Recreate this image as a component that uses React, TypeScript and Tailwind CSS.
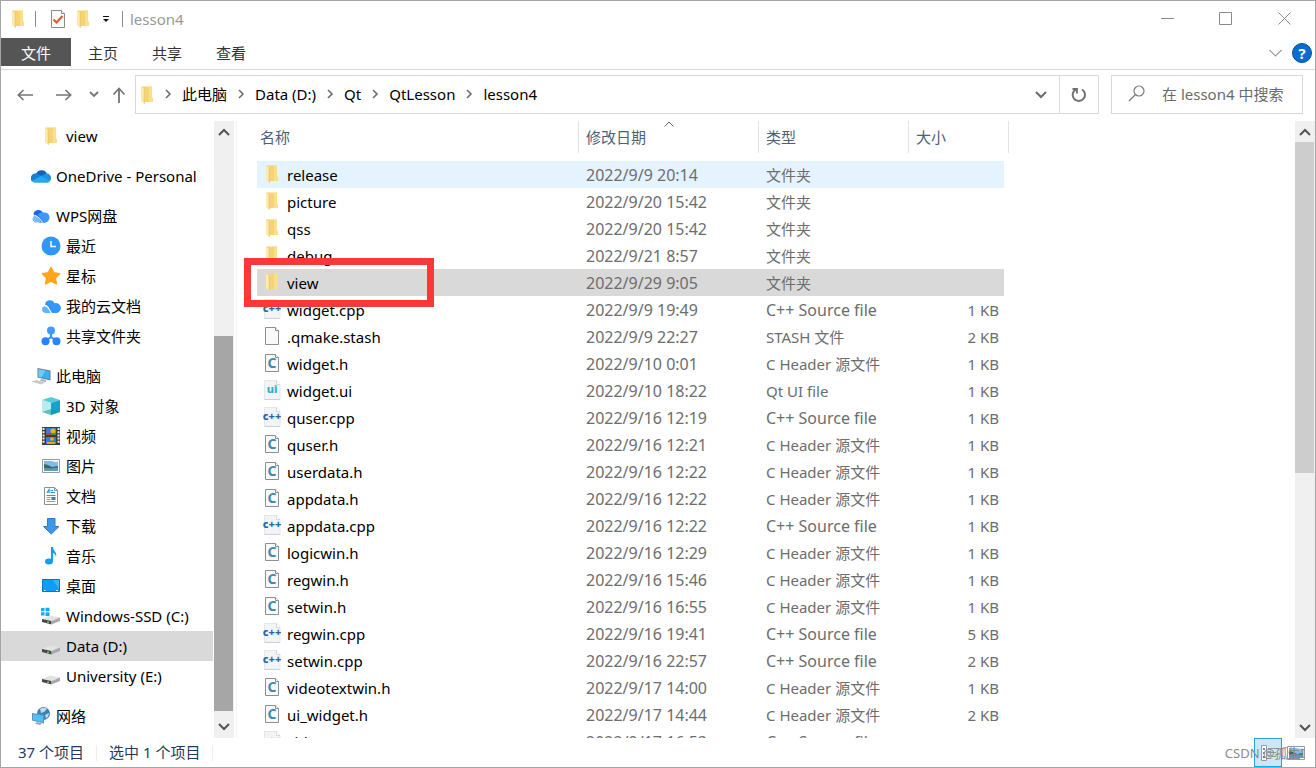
import React from "react";
import clsx from "clsx";

type IconProps = { className?: string };

/* ---------- icons ---------- */

function FolderIcon({ className }: IconProps) {
  return (
    <svg className={clsx("shrink-0", className)} width="14" height="18" viewBox="0 0 14 18">
      <path d="M1 .5h11v11l1 .6V16H3z" fill="#f6d373" />
      <path d="M9 .5h3v11l1 .6V16H9z" fill="#fae08c" />
      <path d="M1 .5l3.600 2.500V18L1 15.600z" fill="#fdeab0" />
      <path d="M4.600 3V18l-.8-.6V2.500z" fill="#e7bd55" />
    </svg>
  );
}

function ChevronRight() {
  return (
    <svg width="8" height="10" viewBox="0 0 8 10" fill="none" stroke="#6d6d6d" strokeWidth="1.6">
      <path d="M2 1l4 4-4 4" />
    </svg>
  );
}

function ChevronDown({ className }: IconProps) {
  return (
    <svg className={className} width="12" height="8" viewBox="0 0 12 8" fill="none" stroke="currentColor" strokeWidth="2">
      <path d="M1 1l5 5 5-5" />
    </svg>
  );
}

function ChevronUp({ className }: IconProps) {
  return (
    <svg className={className} width="12" height="8" viewBox="0 0 12 8" fill="none" stroke="currentColor" strokeWidth="2">
      <path d="M1 7l5-5 5 5" />
    </svg>
  );
}

function PropertiesIcon() {
  return (
    <svg width="16" height="20" viewBox="0 0 16 20">
      <path d="M1.500 1.500h10l3 3v14h-13z" fill="#fafafa" stroke="#8b8b8b" />
      <path d="M11.500 1.500v3h3" fill="#fff" stroke="#8b8b8b" />
      <path d="M3.500 10.500l3 3L12.500 7" fill="none" stroke="#f0561d" strokeWidth="2" />
    </svg>
  );
}

function OneDriveIcon() {
  return (
    <svg width="20" height="14" viewBox="0 0 20 14">
      <path d="M5 5a6 6 0 0 1 11-.5L10 9z" fill="#0f62b5" />
      <path d="M5 4.200A5 5 0 0 0 1 12.500l11-5z" fill="#1480d8" />
      <path d="M15 4.300a4.600 4.600 0 0 1 3.500 8L9 7.500z" fill="#1a92e6" />
      <path d="M1 12l9-5 9 5a3 3 0 0 1-2.500 1.800H4A4 4 0 0 1 1 12z" fill="#28a8ea" />
    </svg>
  );
}

function WpsCloudIcon() {
  return (
    <svg width="20" height="14" viewBox="0 0 20 14">
      <path d="M2.500 5a4.800 4.800 0 0 1 9.300-.8A4.800 4.800 0 0 1 14 13.500H8z" fill="#1769ee" />
      <path d="M7 6a5 5 0 0 1 6-2.500 5 5 0 0 1 1 10h-3z" fill="#3f96fb" />
      <path d="M4 6.500a3.700 3.700 0 0 0 0 7h6C8.500 11 7.500 7 4 6.500z" fill="#7dbdfd" />
      <path d="M3.500 6.300C8 7 9 11 11.500 13.500" fill="none" stroke="#fff" />
    </svg>
  );
}

function CloudDocIcon() {
  return (
    <svg width="20" height="15" viewBox="0 0 20 15">
      <path d="M4 5.500a5 5 0 0 1 9.500-1.300A5 5 0 1 1 14.500 14H11C9 11 8 7 4 5.500z" fill="#3296fa" />
      <path d="M3 7.200a3.600 3.600 0 0 0 1 6.800h5.500C8.500 11 6.500 7.500 3 7.200z" fill="#63b4fc" />
    </svg>
  );
}

function ClockIcon() {
  return (
    <svg width="20" height="20" viewBox="0 0 20 20">
      <circle cx="10" cy="10" r="9.500" fill="#2f96fb" />
      <path d="M10 5v5.500h5" fill="none" stroke="#fff" strokeWidth="1.500" />
    </svg>
  );
}

function StarIcon() {
  return (
    <svg width="20" height="20" viewBox="0 0 20 20">
      <path
        d="M10 1.500l2.600 5.300 5.900.9-4.200 4.200 1 5.900-5.300-2.700-5.300 2.700 1-5.900L1.500 7.700l5.900-.9z"
        fill="#fca71c"
        stroke="#fca71c"
        strokeWidth="1.600"
        strokeLinejoin="round"
      />
    </svg>
  );
}

function ShareIcon() {
  return (
    <svg width="20" height="20" viewBox="0 0 20 20">
      <path d="M10 5v6L4.500 15M10 11l5.500 4" stroke="#2f8ffb" strokeWidth="2" fill="none" />
      <circle cx="10" cy="4.500" r="4" fill="#3f9cfc" />
      <circle cx="4.500" cy="15.200" r="4" fill="#2287fb" />
      <circle cx="15.500" cy="15.200" r="4" fill="#2287fb" />
    </svg>
  );
}

function ComputerIcon() {
  return (
    <svg width="20" height="18" viewBox="0 0 20 18">
      <path d="M6.500 1l13 2.500v10l-13-3z" fill="#6d7c88" />
      <path d="M7.500 2.200l11 2.200v7.800l-11-2.400z" fill="#36b0ee" />
      <path d="M7.500 2.200l7 1.400-4 6.800-3-.6z" fill="#6ccbf7" />
      <path d="M10 12l5 1v2l-6-1z" fill="#aab2b8" />
      <path d="M.5 14.500l5-1.500 8.500 2.500-4 2z" fill="#c5cacf" />
    </svg>
  );
}

function CubeIcon() {
  return (
    <svg width="20" height="20" viewBox="0 0 20 20">
      <path d="M1 4l9-3 9 3-9 3z" fill="#57cbd8" />
      <path d="M1 4l9 3v12l-9-3z" fill="#b9ecef" />
      <path d="M10 7l9-3v12l-9 3z" fill="#16a3cb" />
      <path d="M10 13l9 3-9 3-9-3z" fill="#1795a8" opacity=".55" />
    </svg>
  );
}

function VideoIcon() {
  return (
    <svg width="20" height="20" viewBox="0 0 20 20">
      <path d="M1 1h18v18H1z" fill="#3b3b3b" />
      <path d="M5 2h10v7H5zM5 11h10v7H5z" fill="#3a7bd9" />
      <path d="M2.500 2v16M17.500 2v16" stroke="#eee" strokeWidth="2" strokeDasharray="2 1.200" />
      <circle cx="12" cy="5" r="2.500" fill="#e8b41e" />
      <path d="M5 7h5v2H5z" fill="#c44131" />
      <path d="M10 7h5v2h-5z" fill="#3c9a3c" />
      <circle cx="11" cy="13" r="1.800" fill="#e8b41e" />
      <path d="M6 16h8v2H6z" fill="#e2a82a" />
    </svg>
  );
}

function PictureIcon() {
  return (
    <svg width="20" height="16" viewBox="0 0 20 16">
      <path d="M1.500 1.500h17v13h-17z" fill="#fff" stroke="#9a9a9a" />
      <path d="M3 3h14v6H3z" fill="#7fb9f0" />
      <path d="M3 6l4 1 4 2 6-1v5H3z" fill="#3c6a5b" />
      <path d="M3 10l6 .5 8-1V13H3z" fill="#5d9cbb" />
      <path d="M10 3l5 1.500 2-.5V3z" fill="#fff" opacity=".7" />
    </svg>
  );
}

function DocumentIcon() {
  return (
    <svg width="16" height="20" viewBox="0 0 16 20">
      <path d="M1.500 1.500h10l3 3v14h-13z" fill="#fff" stroke="#8f8f8f" />
      <path d="M11.500 1.500v3h3" fill="none" stroke="#8f8f8f" />
      <path d="M4 7l2-3.500V7M7.500 4.500H10M7.500 6.500H12" stroke="#1e9be8" strokeWidth="1.200" fill="none" />
      <path d="M3.500 9.500h9" stroke="#1e9be8" />
      <path d="M3.500 11.500h4M3.500 13.500h4M3.500 15.500h9" stroke="#9a9a9a" />
      <path d="M8.500 11h4v3h-4z" fill="#2c84c4" />
    </svg>
  );
}

function DownloadIcon() {
  return (
    <svg width="20" height="18" viewBox="0 0 20 18">
      <path d="M6.500 1.500h7.500v8h4L10.300 17 2.500 9.500h4z" fill="#3d97e6" stroke="#2a7cc7" />
    </svg>
  );
}

function MusicIcon() {
  return (
    <svg width="14" height="18" viewBox="0 0 14 18">
      <ellipse cx="5" cy="14.500" rx="4" ry="3" fill="#119df5" />
      <path d="M7 0h2c0 4 4.500 5 3 10-.5-3-2-3.500-3-4v9H7z" fill="#119df5" />
    </svg>
  );
}

function DesktopIcon() {
  return (
    <svg width="20" height="14" viewBox="0 0 20 14">
      <path d="M1.500.5h17v12h-17z" fill="#0d9cf7" stroke="#0675ba" />
      <path d="M12 1h6v9z" fill="#39b4fc" />
      <path d="M3 11.500h1.500M15 11.500h2" stroke="#fff" />
    </svg>
  );
}

function DriveIcon({ windows }: { windows?: boolean }) {
  return (
    <svg width="20" height="18" viewBox="0 0 20 18">
      {windows && (
        <path d="M0 1h3.500v3.300H0zM4.500.7h4v3.600h-4zM0 5.300h3.500v3.300H0zM4.500 5.300h4v3.600h-4z" fill="#11aef0" />
      )}
      <path d="M1 12l8-3.500 10 2-8.500 3.500z" fill="#e3e3e3" />
      <path d="M1 12l9.500 2v3.500L1 15z" fill="#474747" />
      <path d="M10.500 14l8.500-3.500V14l-8.500 3.500z" fill="#a9a9a9" />
      <path d="M6 14.500h2v1.500H6z" fill="#4de04d" />
    </svg>
  );
}

function NetworkIcon() {
  return (
    <svg width="20" height="20" viewBox="0 0 20 20">
      <circle cx="12.500" cy="7.500" r="6.500" fill="#3f7fae" />
      <path d="M9 3c2-2 6-1.500 7 0l-3 3-3 1zM14 9l4-2c0 3-2 5-3 5.500z" fill="#b9dcee" />
      <path d="M1 7l12 1.800v8.700L1 14.500z" fill="#5b95bd" />
      <path d="M2 8.200l10 1.500v6.500l-10-2.400z" fill="#4fc0f8" />
      <path d="M6 16l5 1.500-2 1.500-5-1.200z" fill="#9aa7af" />
    </svg>
  );
}

function FileIcon({ kind }: { kind: string }) {
  if (kind === "folder") return <FolderIcon />;
  if (kind === "cpp" || kind === "ui") {
    return (
      <svg className="shrink-0" width="18" height="20" viewBox="0 0 18 20">
        <path d="M1.500.5h12l3.500 4v15H1.500z" fill="#f3f4f7" stroke="#e6e6e9" />
        <path d="M13.500.5v4H17" fill="#fff" stroke="#d6d6d9" />
        <path d="M1.500 19.500H17" stroke="#cfcfd1" />
        <text
          x="9"
          y="13"
          textAnchor="middle"
          fontFamily="Noto Sans, sans-serif"
          fontWeight="800"
          fontSize="11"
          fill={kind === "cpp" ? "#2764a8" : "#2fb0c4"}
        >
          {kind === "cpp" ? "c++" : "ui"}
        </text>
      </svg>
    );
  }
  return (
    <svg className="shrink-0" width="16" height="20" viewBox="0 0 16 20">
      <path d="M1.500 1.500h10l3 3v14h-13z" fill="#f8fafa" stroke="#8e8e8e" />
      <path d="M11.500 1.500v3h3" fill="#fff" stroke="#8e8e8e" />
      {kind === "h" && (
        <text x="8" y="15" textAnchor="middle" fontFamily="Noto Sans, sans-serif" fontWeight="700" fontSize="14" fill="#4688a5">
          C
        </text>
      )}
    </svg>
  );
}

/* ---------- data ---------- */

const crumbs = ["此电脑", "Data (D:)", "Qt", "QtLesson", "lesson4"];

const navGroups = [
  [{ label: "view", icon: <FolderIcon />, child: true }],
  [{ label: "OneDrive - Personal", icon: <OneDriveIcon /> }],
  [
    { label: "WPS网盘", icon: <WpsCloudIcon /> },
    { label: "最近", icon: <ClockIcon />, child: true },
    { label: "星标", icon: <StarIcon />, child: true },
    { label: "我的云文档", icon: <CloudDocIcon />, child: true },
    { label: "共享文件夹", icon: <ShareIcon />, child: true },
  ],
  [
    { label: "此电脑", icon: <ComputerIcon /> },
    { label: "3D 对象", icon: <CubeIcon />, child: true },
    { label: "视频", icon: <VideoIcon />, child: true },
    { label: "图片", icon: <PictureIcon />, child: true },
    { label: "文档", icon: <DocumentIcon />, child: true },
    { label: "下载", icon: <DownloadIcon />, child: true },
    { label: "音乐", icon: <MusicIcon />, child: true },
    { label: "桌面", icon: <DesktopIcon />, child: true },
    { label: "Windows-SSD (C:)", icon: <DriveIcon windows />, child: true },
    { label: "Data (D:)", icon: <DriveIcon />, child: true, active: true },
    { label: "University (E:)", icon: <DriveIcon />, child: true },
  ],
  [{ label: "网络", icon: <NetworkIcon /> }],
] as { label: string; icon: React.ReactNode; child?: boolean; active?: boolean }[][];

const typeNames: Record<string, string> = {
  folder: "文件夹",
  cpp: "C++ Source file",
  h: "C Header 源文件",
  ui: "Qt UI file",
  stash: "STASH 文件",
};

const files = [
  { name: "release", date: "2022/9/9 20:14", kind: "folder", size: "" },
  { name: "picture", date: "2022/9/20 15:42", kind: "folder", size: "" },
  { name: "qss", date: "2022/9/20 15:42", kind: "folder", size: "" },
  { name: "debug", date: "2022/9/21 8:57", kind: "folder", size: "" },
  { name: "view", date: "2022/9/29 9:05", kind: "folder", size: "" },
  { name: "widget.cpp", date: "2022/9/9 19:49", kind: "cpp", size: "1 KB" },
  { name: ".qmake.stash", date: "2022/9/9 22:27", kind: "stash", size: "2 KB" },
  { name: "widget.h", date: "2022/9/10 0:01", kind: "h", size: "1 KB" },
  { name: "widget.ui", date: "2022/9/10 18:22", kind: "ui", size: "1 KB" },
  { name: "quser.cpp", date: "2022/9/16 12:19", kind: "cpp", size: "1 KB" },
  { name: "quser.h", date: "2022/9/16 12:21", kind: "h", size: "1 KB" },
  { name: "userdata.h", date: "2022/9/16 12:22", kind: "h", size: "1 KB" },
  { name: "appdata.h", date: "2022/9/16 12:22", kind: "h", size: "1 KB" },
  { name: "appdata.cpp", date: "2022/9/16 12:22", kind: "cpp", size: "1 KB" },
  { name: "logicwin.h", date: "2022/9/16 12:29", kind: "h", size: "1 KB" },
  { name: "regwin.h", date: "2022/9/16 15:46", kind: "h", size: "1 KB" },
  { name: "setwin.h", date: "2022/9/16 16:55", kind: "h", size: "1 KB" },
  { name: "regwin.cpp", date: "2022/9/16 19:41", kind: "cpp", size: "5 KB" },
  { name: "setwin.cpp", date: "2022/9/16 22:57", kind: "cpp", size: "2 KB" },
  { name: "videotextwin.h", date: "2022/9/17 14:00", kind: "h", size: "1 KB" },
  { name: "ui_widget.h", date: "2022/9/17 14:44", kind: "h", size: "2 KB" },
  { name: "videonow.cpp", date: "2022/9/17 16:53", kind: "cpp", size: "1 KB" },
];

/* ---------- layout ---------- */

function TitleBar() {
  return (
    <header className="flex h-[37px] shrink-0 items-center pb-0.5 pl-2.5">
      <FolderIcon />
      <span className="ml-2.5 h-4 w-px bg-[#8a8a8a]" />
      <button className="ml-3.5" aria-label="属性">
        <PropertiesIcon />
      </button>
      <button className="ml-2.5" aria-label="新建文件夹">
        <FolderIcon />
      </button>
      <button className="ml-3" aria-label="自定义快速访问工具栏">
        <svg width="8" height="8" viewBox="0 0 8 8">
          <path d="M1 1.500h6" stroke="#111" />
          <path d="M1 4h6L4 7z" fill="#111" />
        </svg>
      </button>
      <span className="ml-3 h-4 w-px bg-[#8a8a8a]" />
      <h1 className="ml-[7px] flex-1 text-[#999999]">lesson4</h1>
      <div className="flex pr-px text-[#8a8a8a]">
        <button className="flex w-[58px] justify-center" aria-label="最小化">
          <svg width="13" height="13" viewBox="0 0 13 13" stroke="currentColor">
            <path d="M0 6.500h13" />
          </svg>
        </button>
        <button className="flex w-[58px] justify-center" aria-label="最大化">
          <svg width="13" height="13" viewBox="0 0 13 13" stroke="currentColor" fill="none">
            <path d="M.5.5h12v12H.5z" />
          </svg>
        </button>
        <button className="flex w-[60px] justify-center" aria-label="关闭">
          <svg width="13" height="13" viewBox="0 0 13 13" stroke="currentColor">
            <path d="M.5.5l12 12M12.500.5l-12 12" />
          </svg>
        </button>
      </div>
    </header>
  );
}

function Ribbon() {
  return (
    <nav className="flex h-8 shrink-0 items-start border-b border-[#dadada] text-[#333333]">
      <button className="h-7 w-[70px] bg-[#555555] pt-0.5 text-white">文件</button>
      <button className="h-7 w-16 pt-0.5">主页</button>
      <button className="h-7 w-16 pt-0.5">共享</button>
      <button className="h-7 w-16 pt-0.5">查看</button>
      <div className="ml-auto flex h-[30px] items-center gap-2.5 pr-[3px]">
        <button aria-label="展开功能区" className="text-[#9a9a9a]">
          <svg width="13" height="8" viewBox="0 0 13 8" fill="none" stroke="currentColor" strokeWidth="1.200">
            <path d="M.5 1l6 6 6-6" />
          </svg>
        </button>
        <button className="flex size-5 items-center justify-center rounded-full border border-[#0a4f96] bg-[#0a6cd0] font-bold text-white" aria-label="帮助">
          ?
        </button>
      </div>
    </nav>
  );
}

function AddressBar() {
  return (
    <div className="flex h-[51px] shrink-0 items-start pt-[5px] pr-3 pl-4">
      <div className="flex h-[39px] w-[118px] shrink-0 items-center text-[#757575]">
        <button aria-label="后退">
          <svg width="17" height="12" viewBox="0 0 17 12" fill="none" stroke="currentColor" strokeWidth="1.600">
            <path d="M16 6H1M6.500 1L1.300 6l5.200 5" />
          </svg>
        </button>
        <button className="ml-[22px]" aria-label="前进">
          <svg width="17" height="12" viewBox="0 0 17 12" fill="none" stroke="currentColor" strokeWidth="1.600">
            <path d="M0 6h15M9.500 1l5.200 5-5.200 5" />
          </svg>
        </button>
        <button className="ml-4" aria-label="最近浏览的位置">
          <svg width="10" height="7" viewBox="0 0 10 7" fill="none" stroke="currentColor" strokeWidth="1.800">
            <path d="M1 1l4 4 4-4" />
          </svg>
        </button>
        <button className="ml-[13px]" aria-label="上移">
          <svg width="14" height="16" viewBox="0 0 14 16" fill="none" stroke="currentColor" strokeWidth="1.800">
            <path d="M7 16V2M1.500 7.500L7 1.500l5.500 6" />
          </svg>
        </button>
      </div>
      <div className="flex h-[39px] flex-1 items-center border border-[#d9d9d9] pl-1">
        <FolderIcon />
        <ol className="flex flex-1 items-center pb-0.5">
          {crumbs.map((crumb) => (
            <li key={crumb} className="flex items-center">
              <span className="flex w-7 justify-center">
                <ChevronRight />
              </span>
              <a href="#">{crumb}</a>
            </li>
          ))}
        </ol>
        <button className="flex h-full w-9 items-center justify-center text-[#6b6b6b]" aria-label="历史记录">
          <ChevronDown />
        </button>
        <button className="flex h-full w-[39px] items-center justify-center border-l border-[#d9d9d9]" aria-label="刷新">
          <svg width="16" height="16" viewBox="0 0 16 16" fill="none" stroke="#707070" strokeWidth="2">
            <path d="M11 2.500a6.200 6.200 0 1 1-6-.2" />
            <path d="M1.500 2h4.500v4.500" strokeWidth="1.800" />
          </svg>
        </button>
      </div>
      <label className="ml-3 flex h-[39px] w-48 shrink-0 items-center border border-[#d9d9d9] pb-0.5 pl-4">
        <svg className="shrink-0" width="18" height="17" viewBox="0 0 18 17" fill="none" stroke="#7a7a7a" strokeWidth="1.200">
          <circle cx="11" cy="6" r="5" />
          <path d="M7.500 9.500L1 16" />
        </svg>
        <input
          type="text"
          aria-label="搜索"
          placeholder="在 lesson4 中搜索"
          className="ml-4 w-full min-w-0 outline-none placeholder:text-[#6b6b6b]"
        />
      </label>
    </div>
  );
}

function Sidebar() {
  return (
    <aside className="flex w-[236px] shrink-0 border-r border-[#f3f3f3]">
      <nav className="flex w-[212px] shrink-0 flex-col gap-2.5 overflow-hidden">
        {navGroups.map((group, i) => (
          <ul key={i}>
            {group.map((item) => (
              <li key={item.label}>
                <a
                  href="#"
                  className={clsx(
                    "flex h-[30px] items-center gap-1 whitespace-nowrap",
                    item.child ? "pl-10" : "pl-[30px]",
                    item.active && "bg-[#d9d9d9]",
                  )}
                >
                  <span className="flex w-5 shrink-0 justify-center">{item.icon}</span>
                  <span className="pl-px">{item.label}</span>
                </a>
              </li>
            ))}
          </ul>
        ))}
      </nav>
      <div className="ml-px flex w-5 flex-col bg-[#f0f0f0] text-[#555555]">
        <div className="flex h-[21px] w-[19px] items-center justify-center">
          <ChevronUp />
        </div>
        <div className="flex-[194]" />
        <div className="w-[19px] flex-[375] bg-[#a6a6a6]" />
        <div className="flex h-[27px] w-[19px] items-end justify-center pb-[7px]">
          <ChevronDown />
        </div>
      </div>
    </aside>
  );
}

function FileList() {
  return (
    <main className="flex min-w-0 flex-1">
      <div className="min-w-0 flex-1 overflow-hidden pl-5">
        <table className="w-[752px] table-fixed border-separate border-spacing-0 whitespace-nowrap">
          <colgroup>
            <col className="w-[322px]" />
            <col className="w-[180px]" />
            <col className="w-[150px]" />
            <col className="w-[95px]" />
            <col className="w-[5px]" />
          </colgroup>
          <thead className="text-left text-[#4c607a]">
            <tr className="h-8">
              <th className="border-r border-[#e3e3e3] p-0 pl-[3px] font-normal">名称</th>
              <th aria-sort="ascending" className="relative border-r border-[#e3e3e3] p-0 pl-[7px] font-normal">
                修改日期
                <svg className="absolute top-0 left-1/2 -translate-x-1/2" width="10" height="6" viewBox="0 0 10 6" fill="none" stroke="#6d6d6d">
                  <path d="M.5 5.500L5 1l4.500 4.500" />
                </svg>
              </th>
              <th className="border-r border-[#e3e3e3] p-0 pl-[7px] font-normal">类型</th>
              <th colSpan={2} className="border-r border-[#e3e3e3] p-0 pl-[7px] font-normal">
                大小
              </th>
            </tr>
          </thead>
          <tbody className="text-[#6d6d6d]">
            <tr className="h-2" aria-hidden="true" />
            {files.map((file) => (
              <tr
                key={file.name}
                className={clsx(
                  "h-[27px]",
                  file.name === "release" && "[&>td]:bg-[#e5f3ff]",
                  file.name === "view" && "[&>td]:bg-[#d9d9d9]",
                )}
              >
                <td className="relative p-0 pl-1.5 text-black">
                  <div className="flex h-[27px] items-center gap-1.5">
                    <span className="flex w-[18px] shrink-0 justify-center pb-0.5">
                      <FileIcon kind={file.kind} />
                    </span>
                    {file.name}
                  </div>
                  {file.name === "view" && (
                    <div className="absolute -top-[11px] -left-[13px] z-10 h-[49px] w-[190px] border-7 border-[#fb3838]" />
                  )}
                </td>
                <td className="p-0 pl-[7px] text-base/5">{file.date}</td>
                <td className={clsx("p-0 pl-[7px]", file.kind === "cpp" && "text-base/5")}>{typeNames[file.kind]}</td>
                <td className="p-0 pr-[5px] text-right">{file.size}</td>
              </tr>
            ))}
          </tbody>
        </table>
      </div>
      <div className="flex w-5 shrink-0 flex-col bg-[#f0f0f0] text-[#555555]">
        <div className="flex h-[21px] w-[19px] items-center justify-center">
          <ChevronUp />
        </div>
        <div className="w-[19px] flex-[331] bg-[#cdcdcd]" />
        <div className="flex-[244]" />
        <div className="flex h-[21px] w-[19px] items-center justify-center">
          <ChevronDown />
        </div>
      </div>
    </main>
  );
}

function StatusBar() {
  return (
    <footer className="relative flex h-[29px] shrink-0 items-center pr-[9px] pl-[17px] text-[#1f3a5c]">
      <span className="pb-0.5">37 个项目</span>
      <span className="mx-3 h-4 w-px bg-[#eeeeee]" />
      <span className="pb-0.5">选中 1 个项目</span>
      <span className="mx-3 h-4 w-px bg-[#eeeeee]" />
      <div className="ml-auto flex items-center gap-1">
        <button className="flex h-[29px] w-7 items-center justify-center border border-[#26a0da] bg-[#cce8f6]" aria-label="详细信息">
          <svg width="17" height="16" viewBox="0 0 17 16">
            <path d="M1.500.5h5v15h-5z" fill="#fff" stroke="#9a9a9a" />
            <path d="M3 3h2v2H3z" fill="#4b8bd0" />
            <path d="M3 7h2v2H3z" fill="#58a558" />
            <path d="M3 11h2v2H3z" fill="#d04b3b" />
            <path d="M8 3.500h8M8 7.500h8M8 11.500h8" stroke="#9a9a9a" />
          </svg>
        </button>
        <button aria-label="大缩略图">
          <PictureIcon />
        </button>
      </div>
      <span className="absolute right-2.5 bottom-1 text-[13px] text-[#8a8a8a]">CSDN @孤生I</span>
    </footer>
  );
}

export default function App() {
  return (
    <div className="flex h-screen flex-col overflow-hidden border border-[#a5a5a5] bg-white font-['Noto_Sans','Noto_Sans_CJK_SC',sans-serif] text-[15px] leading-5 text-black">
      <TitleBar />
      <Ribbon />
      <AddressBar />
      <div className="flex min-h-0 flex-1">
        <Sidebar />
        <FileList />
      </div>
      <StatusBar />
    </div>
  );
}
